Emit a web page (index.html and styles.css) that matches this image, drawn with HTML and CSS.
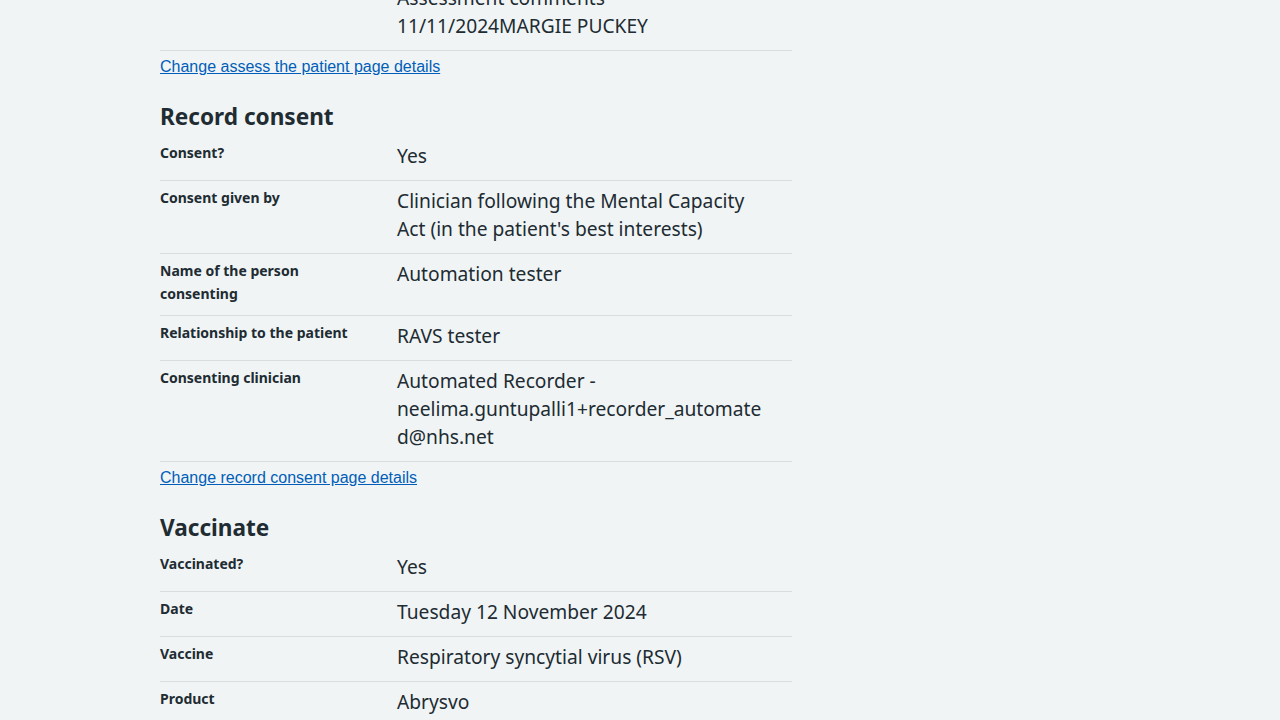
FILE: index.html
```html
<!DOCTYPE html>
<html lang="en">
<head>
<meta charset="utf-8">
<title>Check and confirm</title>
<link rel="stylesheet" href="styles.css">
</head>
<body>
<main class="page">
  <section class="section section--first">
    <dl class="summary">
      <div class="summary__row">
        <dt class="summary__key">Comments</dt>
        <dd class="summary__value">Assessment comments<br>11/11/2024MARGIE PUCKEY</dd>
      </div>
    </dl>
    <p class="change"><a class="change__link" href="#">Change assess the patient page details</a></p>
  </section>

  <section class="section">
    <h2 class="section__title">Record consent</h2>
    <dl class="summary">
      <div class="summary__row">
        <dt class="summary__key">Consent?</dt>
        <dd class="summary__value">Yes</dd>
      </div>
      <div class="summary__row">
        <dt class="summary__key">Consent given by</dt>
        <dd class="summary__value">Clinician following the Mental Capacity Act (in the patient's best interests)</dd>
      </div>
      <div class="summary__row">
        <dt class="summary__key">Name of the person consenting</dt>
        <dd class="summary__value">Automation tester</dd>
      </div>
      <div class="summary__row">
        <dt class="summary__key">Relationship to the patient</dt>
        <dd class="summary__value">RAVS tester</dd>
      </div>
      <div class="summary__row">
        <dt class="summary__key">Consenting clinician</dt>
        <dd class="summary__value">Automated Recorder - neelima.guntupalli1+recorder_automated@nhs.net</dd>
      </div>
    </dl>
    <p class="change"><a class="change__link" href="#">Change record consent page details</a></p>
  </section>

  <section class="section">
    <h2 class="section__title">Vaccinate</h2>
    <dl class="summary">
      <div class="summary__row">
        <dt class="summary__key">Vaccinated?</dt>
        <dd class="summary__value">Yes</dd>
      </div>
      <div class="summary__row">
        <dt class="summary__key">Date</dt>
        <dd class="summary__value">Tuesday 12 November 2024</dd>
      </div>
      <div class="summary__row">
        <dt class="summary__key">Vaccine</dt>
        <dd class="summary__value">Respiratory syncytial virus (RSV)</dd>
      </div>
      <div class="summary__row">
        <dt class="summary__key">Product</dt>
        <dd class="summary__value">Abrysvo</dd>
      </div>
    </dl>
  </section>
</main>
</body>
</html>
```
FILE: styles.css
```css
html, body {
  margin: 0;
  padding: 0;
  background: #f0f4f5;
}

body {
  font-family: "Noto Sans", "Open Sans", sans-serif;
  color: #212b32;
}

.page {
  width: 632px;
  margin: -22px 0 0 160px;
}

.section__title {
  margin: 0 0 3px;
  font-size: 22.6px;
  line-height: 32px;
  font-weight: 700;
}

.summary {
  margin: 0;
  padding: 0;
}

.summary__row {
  display: grid;
  grid-template-columns: 237px 1fr;
  border-bottom: 1px solid #d8dde0;
}

.summary__key {
  margin: 0;
  padding: 6px 24px 10px 0;
  font-size: 14px;
  line-height: 22.5px;
  font-weight: 700;
}

.summary__value {
  margin: 0;
  padding: 6px 24px 10px 0;
  font-size: 19.2px;
  line-height: 28px;
  overflow-wrap: break-word;
  word-wrap: break-word;
  min-width: 0;
}

.change {
  margin: 4px 0 22px;
  font-family: "Liberation Sans", Arial, sans-serif;
  font-size: 16px;
  line-height: 24px;
}

.change__link {
  color: #005eb8;
  text-decoration: underline;
}
```
